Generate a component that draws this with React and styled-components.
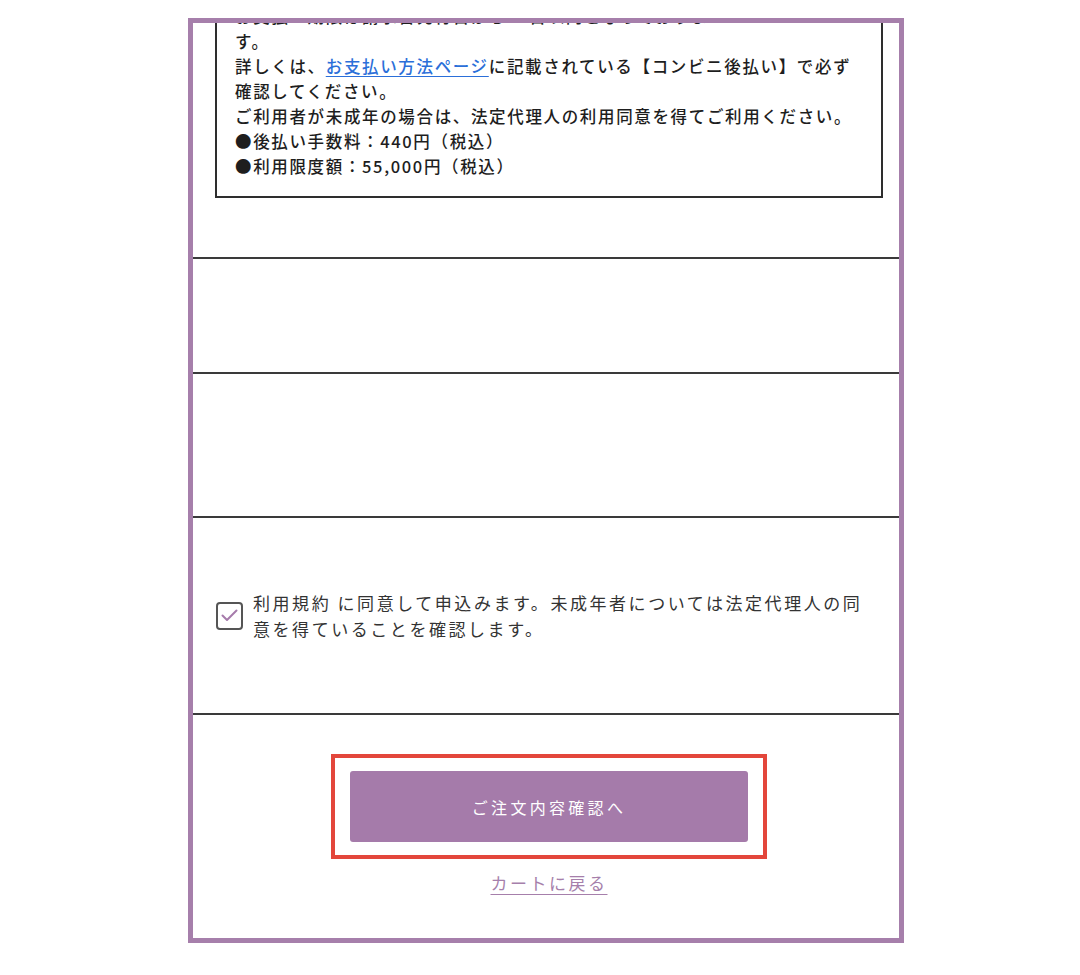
import React from "react";
import styled, { createGlobalStyle } from "styled-components";

const GlobalStyle = createGlobalStyle`
  body {
    margin: 0;
    background: #ffffff;
    font-family: "Noto Sans CJK JP", "Noto Sans", sans-serif;
    color: #222;
  }
`;

export default function App() {
  return (
    <>
      <GlobalStyle />
      <Page>
        <Frame>
          <NoticeSection>
            <NoticeBox>
              <Line>お支払い期限は請求書発行日から14日以内となっておりま</Line>
              <Line>す。</Line>
              <Line>
                詳しくは、<BlueLink href="#">お支払い方法ページ</BlueLink>に記載されている【コンビニ後払い】で必ず
              </Line>
              <Line>確認してください。</Line>
              <Line>ご利用者が未成年の場合は、法定代理人の利用同意を得てご利用ください。</Line>
              <Line>●後払い手数料：440円（税込）</Line>
              <Line>●利用限度額：55,000円（税込）</Line>
            </NoticeBox>
          </NoticeSection>

          <Row $h={115} />
          <Row $h={144} />

          <AgreeRow>
            <CheckBox>
              <svg width="17" height="13" viewBox="0 0 17 13" fill="none">
                <path d="M1.5 6.5 L6 11 L15.5 1.5" stroke="#a67bab" strokeWidth="2" strokeLinecap="round" strokeLinejoin="round" />
              </svg>
            </CheckBox>
            <AgreeText>
              利用規約 に同意して申込みます。未成年者については法定代理人の同意を得ていることを確認します。
            </AgreeText>
          </AgreeRow>

          <ButtonSection>
            <Highlight>
              <SubmitButton type="button">ご注文内容確認へ</SubmitButton>
            </Highlight>
            <BackLink href="#">カートに戻る</BackLink>
          </ButtonSection>
        </Frame>
      </Page>
    </>
  );
}

const Page = styled.div`
  padding: 18px 0 0 188px;
`;

const Frame = styled.div`
  box-sizing: border-box;
  width: 716px;
  height: 925px;
  border: 5px solid #a67fab;
  overflow: hidden;
  background: #fff;
`;

const NoticeSection = styled.div`
  padding: 0 16px 59px 22px;
`;

const NoticeBox = styled.div`
  margin-top: -37px;
  border: 2px solid #2e2e2e;
  padding: 16px 6px 17px 18px;
  font-size: 16.5px;
  font-weight: 500;
  line-height: 25px;
  letter-spacing: 1.65px;
  color: #1e1e1e;
`;

const Line = styled.div`
  white-space: nowrap;
`;

const BlueLink = styled.a`
  color: #2b6fd9;
  text-decoration: underline;
  text-underline-offset: 3px;
`;

const Row = styled.div`
  box-sizing: border-box;
  height: ${(p) => p.$h}px;
  border-top: 2px solid #3a3a3a;
`;

const AgreeRow = styled.div`
  box-sizing: border-box;
  height: 197px;
  border-top: 2px solid #3a3a3a;
  display: flex;
  align-items: center;
  gap: 10px;
  padding: 0 30px 0 23px;
`;

const CheckBox = styled.span`
  box-sizing: border-box;
  flex: 0 0 27px;
  width: 27px;
  height: 28px;
  border: 2px solid #555;
  border-radius: 4px;
  display: flex;
  align-items: center;
  justify-content: center;
  background: #fff;
`;

const AgreeText = styled.p`
  margin: 0;
  font-size: 17px;
  line-height: 26px;
  letter-spacing: 2.55px;
  color: #333;
`;

const ButtonSection = styled.div`
  border-top: 2px solid #3a3a3a;
  padding-top: 39px;
  display: flex;
  flex-direction: column;
  align-items: center;
`;

const Highlight = styled.div`
  margin-left: 6px;
  border: 4px solid #e3463b;
  padding: 13px 15px;
`;

const SubmitButton = styled.button`
  display: block;
  width: 398px;
  height: 71px;
  border: none;
  border-radius: 3px;
  background: #a57baa;
  color: #fff;
  font-family: "Noto Sans CJK JP", sans-serif;
  font-size: 16px;
  letter-spacing: 3.3px;
  cursor: pointer;
`;

const BackLink = styled.a`
  margin-top: 12px;
  margin-left: 6px;
  font-size: 17px;
  line-height: 24px;
  letter-spacing: 2.5px;
  color: #a67fab;
  text-decoration: underline;
  text-underline-offset: 4px;
`;
